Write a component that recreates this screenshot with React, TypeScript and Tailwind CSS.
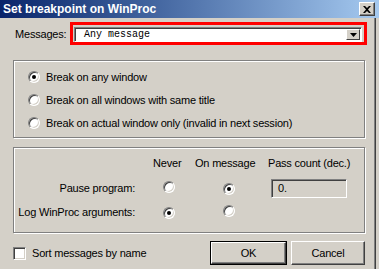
import React from 'react';

function Radio({ checked }: { checked?: boolean }) {
  return (
    <span className="relative inline-flex h-[12px] w-[12px] shrink-0 items-center justify-center rounded-full border border-t-[#808080] border-l-[#808080] border-b-white border-r-white bg-white shadow-[inset_1px_1px_0_#404040,inset_-1px_-1px_0_#d4d0c8]">
      {checked && <span className="h-[4px] w-[4px] rounded-full bg-black" />}
    </span>
  );
}

function Button({ label, isDefault }: { label: string; isDefault?: boolean }) {
  return (
    <div
      className={
        isDefault
          ? 'h-[24px] w-[77px] border border-black'
          : 'h-[24px] w-[74px]'
      }
    >
      <div className="flex h-full w-full items-center justify-center border border-t-white border-l-white border-b-[#404040] border-r-[#404040] bg-[#d4d0c8] shadow-[inset_-1px_-1px_0_#808080]">
        {label}
      </div>
    </div>
  );
}

export default function App() {
  return (
    <div className="relative h-[269px] w-[379px] overflow-hidden bg-[#d4d0c8] font-['Liberation_Sans',Arial,sans-serif] text-[11px] leading-none tracking-[-0.2px] text-black">
      {/* title bar */}
      <div className="flex h-[18px] items-center justify-between bg-gradient-to-r from-[#0a246a] to-[#a6caf0] pl-[3px] pr-[4px]">
        <span className="text-[12px] font-bold tracking-normal text-white">Set breakpoint on WinProc</span>
        <div className="flex h-[14px] w-[16px] items-center justify-center border border-t-white border-l-white border-b-[#404040] border-r-[#404040] bg-[#d4d0c8] shadow-[inset_-1px_-1px_0_#808080]">
          <svg width="8" height="7" viewBox="0 0 8 7">
            <path d="M0 0h2l2 2 2-2h2L5 3.5 8 7H6L4 5 2 7H0l3-3.5z" fill="#000" />
          </svg>
        </div>
      </div>

      {/* messages row */}
      <div className="mt-[9px] flex h-[15px] items-center">
        <span className="ml-[15px] w-[59px]">Messages:</span>
        <div className="flex h-[15px] w-[288px] items-center justify-between border border-t-[#808080] border-l-[#808080] border-b-white border-r-white bg-white pr-[1px] shadow-[inset_1px_1px_0_#404040]">
          <span className="ml-[9px] font-['Liberation_Mono',monospace] text-[10px] tracking-normal">Any message</span>
          <div className="flex h-[11px] w-[14px] items-center justify-center border border-t-white border-l-white border-b-[#404040] border-r-[#404040] bg-[#d4d0c8]">
            <svg width="7" height="4" viewBox="0 0 7 4">
              <path d="M0 0h7L3.5 4z" fill="#000" />
            </svg>
          </div>
        </div>
      </div>
      <div className="absolute left-[70px] top-[22px] h-[23px] w-[297px] border-[3px] border-[#ff0000]" />

      {/* window frame, right edge */}
      <div className="absolute left-[374px] top-[18px] h-[251px] w-[2px] border-l border-r border-l-[#808080] border-r-[#404040]" />

      {/* group 1 */}
      <div className="ml-[13px] mt-[18px] h-[78px] w-[352px] border border-[#808080] pl-[14px] pt-[9px] shadow-[inset_1px_1px_0_#fff,1px_1px_0_#fff]">
        {[
          ['Break on any window', true],
          ['Break on all windows with same title', false],
          ['Break on actual window only (invalid in next session)', false],
        ].map(([text, checked], i) => (
          <div key={i} className="mb-[9px] flex h-[14px] items-center gap-[6px]">
            <Radio checked={checked as boolean} />
            <span>{text as string}</span>
          </div>
        ))}
      </div>

      {/* group 2 */}
      <div className="ml-[13px] mt-[9px] h-[86px] w-[352px] border border-[#808080] pt-[4px] shadow-[inset_1px_1px_0_#fff,1px_1px_0_#fff]">
        <div className="flex h-[22px] items-center whitespace-nowrap">
          <span className="ml-[139px] w-[42px]">Never</span>
          <span className="w-[73px]">On message</span>
          <span>Pass count (dec.)</span>
        </div>
        <div className="mt-[3px] flex h-[22px] items-center">
          <span className="w-[121px] whitespace-nowrap text-right">Pause program:</span>
          <span className="ml-[28px]"><Radio /></span>
          <span className="ml-[48px]"><Radio checked /></span>
          <div className="ml-[36px] flex h-[19px] w-[76px] items-center border border-t-[#808080] border-l-[#808080] border-b-white border-r-white pl-[6px] shadow-[inset_1px_1px_0_#404040]">
            0.
          </div>
        </div>
        <div className="mt-[2px] flex h-[22px] items-center">
          <span className="w-[121px] whitespace-nowrap text-right">Log WinProc arguments:</span>
          <span className="ml-[28px]"><Radio checked /></span>
          <span className="ml-[48px]"><Radio /></span>
        </div>
      </div>

      {/* bottom row */}
      <div className="mt-[8px] flex h-[24px] items-center">
        <div className="ml-[13px] h-[13px] w-[13px] border border-t-[#808080] border-l-[#808080] border-b-white border-r-white bg-white shadow-[inset_1px_1px_0_#404040,inset_-1px_-1px_0_#d4d0c8]" />
        <span className="ml-[6px]">Sort messages by name</span>
        <div className="ml-auto mr-[14px] flex gap-[4px]">
          <Button label="OK" isDefault />
          <Button label="Cancel" />
        </div>
      </div>
    </div>
  );
}
